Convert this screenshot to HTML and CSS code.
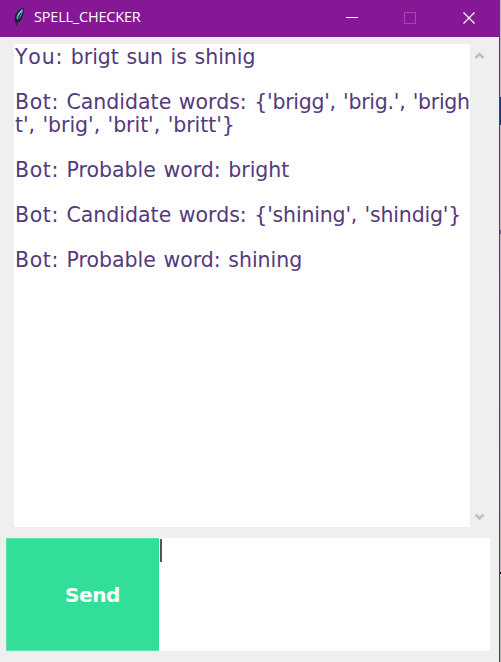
FILE: index.html
```html
<!DOCTYPE html>
<html lang="en">
<head>
<meta charset="utf-8">
<title>SPELL_CHECKER</title>
<link rel="stylesheet" href="styles.css">
</head>
<body>
<div class="desktop">
<div class="window">
  <header class="titlebar">
    <svg class="feather" width="12" height="22" viewBox="0 0 12 22">
      <path d="M10.500 1.500C7 2.500 3 6 1.800 10.500L1.800 15l1 2.500L7.500 15c2.500-3.500 4-9.500 3-13.500z" fill="#182330"/>
      <path d="M9.700 2.800C6.500 5 4 8.500 3.200 12l1.600 2.200C8 11.500 10.300 6.500 9.700 2.800z" fill="#5c96c8"/>
      <path d="M8 7C6.500 10 4 14 3.500 20" fill="none" stroke="#142234" stroke-width="1"/>
      <path d="M9 4L5 9" stroke="#a9cdea" stroke-width="1"/>
    </svg>
    <h1 class="title">SPELL_CHECKER</h1>
    <div class="controls">
      <svg width="58" height="37" viewBox="0 0 58 37"><path d="M16 17.500h12" stroke="#fff"/></svg>
      <svg width="58" height="37" viewBox="0 0 58 37"><rect x="16.500" y="12.500" width="11" height="11" fill="none" stroke="#a648b2"/></svg>
      <svg width="53" height="37" viewBox="0 0 53 37"><path d="M17.500 12.500l11 11m0-11l-11 11" stroke="#fff" stroke-width="1.200"/></svg>
    </div>
  </header>
  <main class="body">
    <section class="log-row">
      <div class="log">
        <p><span class="you">You:</span> <span class="typed">brigt sun is shinig</span></p>
        <p><span class="bot">Bot:</span> Candidate words: <span class="words tight">{'brigg', 'brig.', 'brigh</span><br><span class="rest">t', 'brig', 'brit', 'britt'}</span></p>
        <p><span class="bot">Bot:</span> Probable word: bright</p>
        <p><span class="bot">Bot:</span> Candidate words: <span class="words">{'shining', 'shindig'}</span></p>
        <p><span class="bot">Bot:</span> Probable word: shining</p>
      </div>
      <div class="scrollbar">
        <svg width="20" height="20" viewBox="0 0 20 20"><path d="M5.500 14l4-4 4 4" fill="none" stroke="#bfbfbf" stroke-width="2.600"/></svg>
        <svg width="20" height="20" viewBox="0 0 20 20"><path d="M5.500 7.500l4 4 4-4" fill="none" stroke="#bfbfbf" stroke-width="2.600"/></svg>
      </div>
    </section>
    <section class="input-row">
      <button class="send">Send</button>
      <div class="entry"><span class="caret"></span></div>
    </section>
  </main>
</div>
<div class="edge"></div>
</div>
</body>
</html>
```
FILE: styles.css
```css
* { box-sizing: border-box; }
body { margin: 0; overflow: hidden; }
.desktop { display: flex; width: 501px; height: 662px; }
.window {
  display: flex;
  flex-direction: column;
  width: 500px;
  border-right: 1px solid #861795;
  background: #efefef;
}
.edge {
  width: 1px;
  background: linear-gradient(#c9b9cc 97px, #17386b 97px, #17386b 125px, #c9b9cc 125px, #c9b9cc 230px, #76558c 230px, #76558c 234px, #c9b9cc 234px, #bdb6be 572px, #10101c 572px, #10101c 574px, #bdb6be 574px);
}
.titlebar {
  display: flex;
  align-items: center;
  height: 37px;
  padding-left: 13px;
  background: #861795;
}
.feather { margin-top: -3px; }
.title {
  margin: -3px 0 0 9px;
  color: #fff;
  font: 400 14.5px/20px "Open Sans", sans-serif;
  letter-spacing: -0.2px;
}
.controls { display: flex; height: 37px; margin-left: auto; }
.controls svg { display: block; }
.body { padding: 7px 9px 0 6px; }
.log-row { display: flex; height: 483px; margin-left: 8px; }
.log {
  width: 456px;
  padding: 2px 0 0 1px;
  background: #fff;
  color: #543a7c;
  font: 20.5px/22.5px "DejaVu Sans", sans-serif;
  white-space: nowrap;
  word-spacing: 1px;
}
.log p { margin: 0 0 22.5px; }
.you { letter-spacing: 0.8px; font-kerning: none; }
.typed { letter-spacing: 0; }
.bot { letter-spacing: 0.6px; }
.words { letter-spacing: -0.18px; }
.tight { letter-spacing: -0.27px; }
.rest { letter-spacing: -0.05px; }
.scrollbar {
  display: flex;
  flex-direction: column;
  justify-content: space-between;
  width: 20px;
}
.scrollbar svg { display: block; }
.input-row { display: flex; height: 113px; margin-top: 11px; }
.send {
  width: 153px;
  padding: 0 0 0 19px;
  border: 1px solid #5be5ac;
  border-right: 0;
  background: #33df98;
  color: #fff;
  font: bold 20px/24px "DejaVu Sans", sans-serif;
  letter-spacing: -0.4px;
}
.entry { flex: 1; padding: 1px; background: #fff; }
.caret { display: block; width: 2px; height: 23px; background: #555; }
```
